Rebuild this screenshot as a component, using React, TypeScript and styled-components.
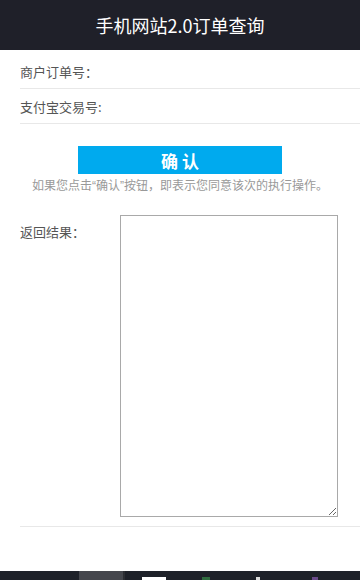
import styled, { createGlobalStyle } from "styled-components";

const GlobalStyle = createGlobalStyle`
  html, body {
    margin: 0;
    padding: 0;
    background: #ffffff;
    font-family: "Noto Sans CJK SC", "Liberation Sans", sans-serif;
  }
  #root {
    height: 580px;
    display: flex;
    flex-direction: column;
  }
`;

const Page = styled.div`
  flex: 1;
  display: flex;
  flex-direction: column;
`;

const Header = styled.div`
  height: 50px;
  background: #1f2029;
  color: #ffffff;
  display: flex;
  align-items: center;
  justify-content: center;
  font-size: 18px;
`;

const Form = styled.div`
  padding-left: 20px;
  display: flex;
  flex-direction: column;
`;

const Row = styled.div<{ first?: boolean }>`
  height: 34px;
  padding-top: ${(p) => (p.first ? 4 : 0)}px;
  border-bottom: 1px solid #e8e8e8;
  display: flex;
  align-items: center;
  font-size: 13px;
  color: #555555;
`;

const ButtonArea = styled.div`
  display: flex;
  flex-direction: column;
  align-items: center;
  padding-top: 22px;
  margin-left: -20px;
`;

const ConfirmButton = styled.button`
  width: 204px;
  height: 28px;
  border: none;
  background: #00aaee;
  color: #ffffff;
  font-family: inherit;
  font-size: 17px;
  font-weight: bold;
  letter-spacing: 4px;
  padding: 0 0 0 4px;
`;

const Note = styled.div`
  margin-top: 2px;
  font-family: "Liberation Sans", "Noto Sans CJK SC", sans-serif;
  font-size: 12px;
  color: #999999;
`;

const ResultRow = styled.div`
  display: flex;
  margin-top: 22px;
  padding-bottom: 9px;
  border-bottom: 1px solid #e8e8e8;
`;

const ResultLabel = styled.div`
  width: 100px;
  padding-top: 7px;
  font-size: 13px;
  color: #555555;
`;

const ResultBox = styled.textarea`
  width: 218px;
  height: 302px;
  box-sizing: border-box;
  border: 1px solid #a9a9a9;
  margin: 0;
  padding: 2px;
  font-family: inherit;
  outline: none;
`;

const Taskbar = styled.div`
  height: 9px;
  background: #1e2129;
  display: flex;
  align-items: flex-end;
`;

const TaskItem = styled.div<{ w: number; c: string; ml: number }>`
  width: ${(p) => p.w}px;
  height: 3px;
  margin-left: ${(p) => p.ml}px;
  background: ${(p) => p.c};
`;

const ActiveTask = styled.div`
  width: 44px;
  height: 9px;
  margin-left: 79px;
  background: #45474d;
  border-right: 2px solid #2c2e33;
`;

export default function App() {
  return (
    <>
      <GlobalStyle />
      <Page>
        <Header>手机网站2.0订单查询</Header>
        <Form>
          <Row first>商户订单号：</Row>
          <Row>支付宝交易号:</Row>
          <ButtonArea>
            <ConfirmButton>确认</ConfirmButton>
            <Note>如果您点击“确认”按钮，即表示您同意该次的执行操作。</Note>
          </ButtonArea>
          <ResultRow>
            <ResultLabel>返回结果：</ResultLabel>
            <ResultBox />
          </ResultRow>
        </Form>
      </Page>
      <Taskbar>
        <ActiveTask />
        <TaskItem w={24} c="#ffffff" ml={17} />
        <TaskItem w={8} c="#2f6b3f" ml={36} />
        <TaskItem w={4} c="#dddddd" ml={46} />
        <TaskItem w={6} c="#6a4a8a" ml={52} />
      </Taskbar>
    </>
  );
}
